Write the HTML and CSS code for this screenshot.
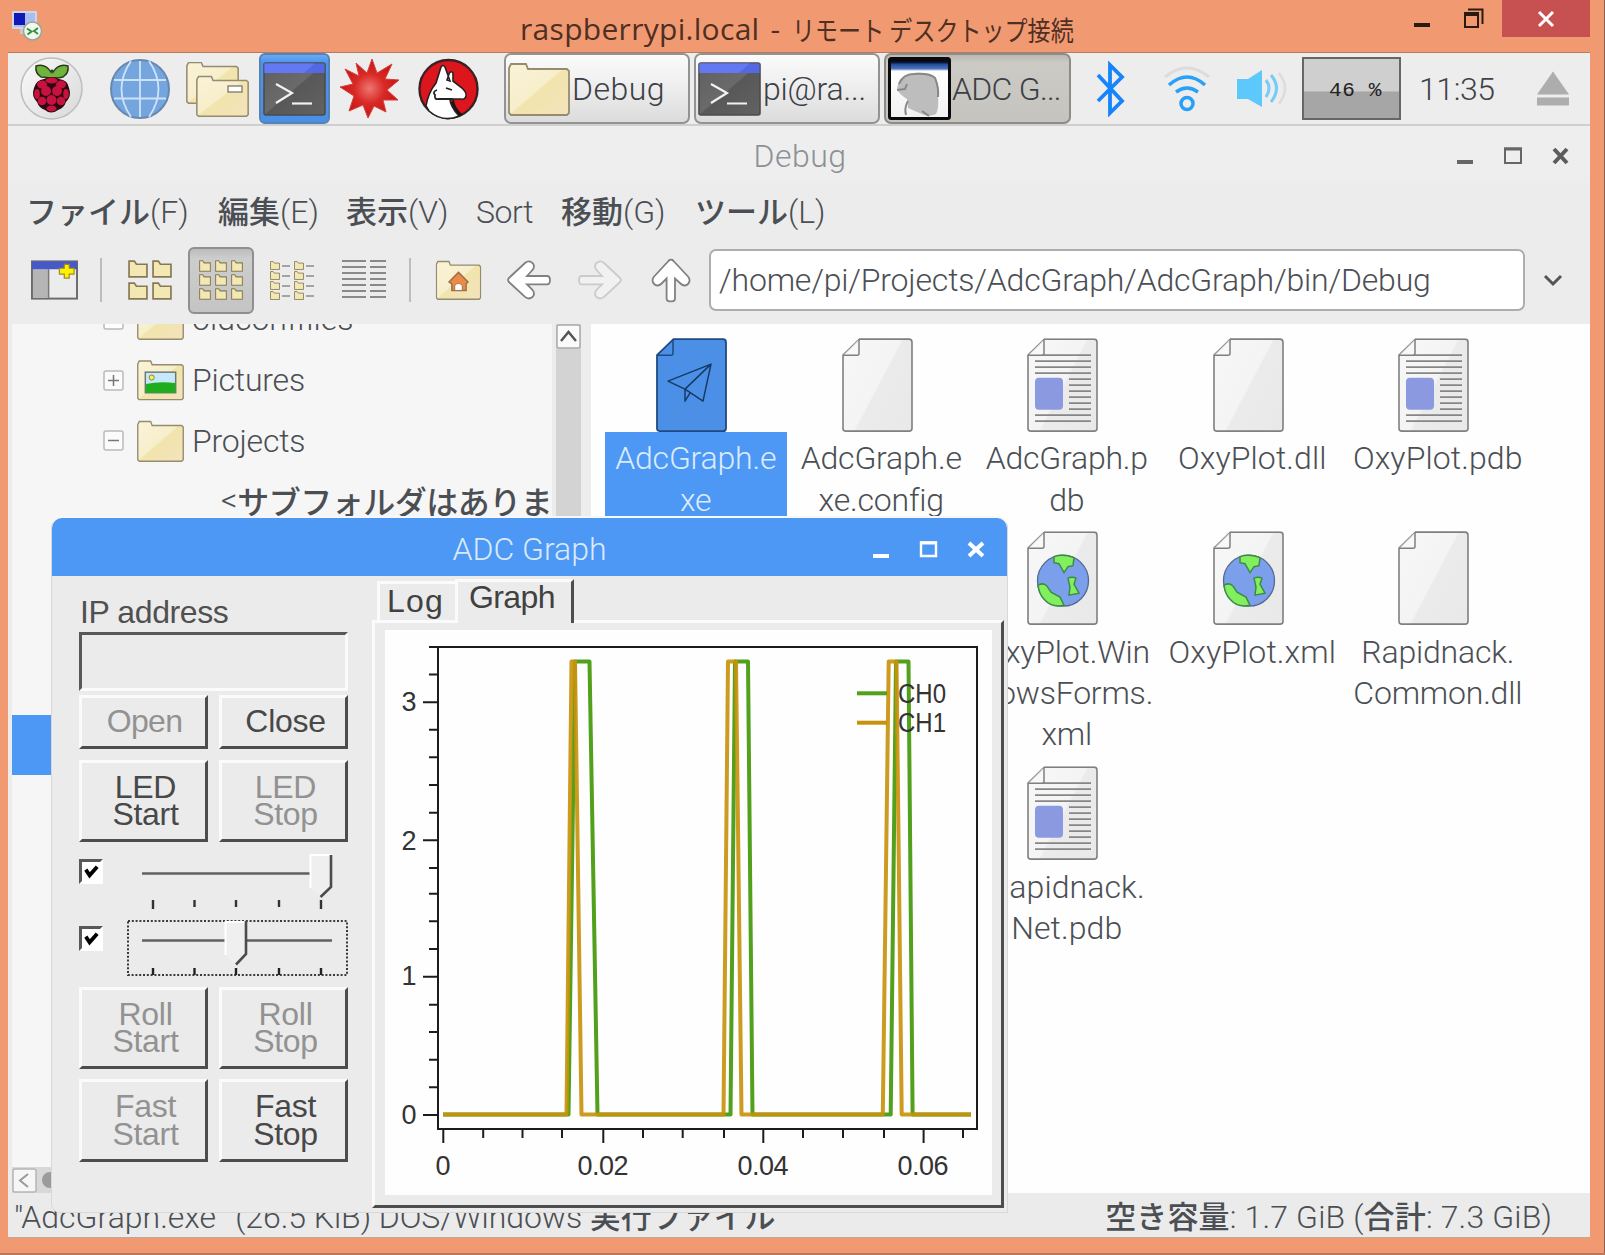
FILE: index.html
```html
<!DOCTYPE html>
<html lang="ja">
<head>
<meta charset="utf-8">
<title>raspberrypi.local - リモート デスクトップ接続</title>
<link rel="stylesheet" href="styles.css">
</head>
<body>
<svg class="defs" width="0" height="0" aria-hidden="true">
  <defs>
    <linearGradient id="gFolder" x1="0" y1="0" x2="1" y2="1">
      <stop offset="0" stop-color="#faf3d8"/><stop offset=".49" stop-color="#f7eecb"/><stop offset=".51" stop-color="#f1e4ac"/><stop offset="1" stop-color="#f3e3bd"/>
    </linearGradient>
    <linearGradient id="gPage" x1="0" y1=".15" x2="1" y2=".85">
      <stop offset="0" stop-color="#f7f7f7"/><stop offset=".5" stop-color="#f4f4f4"/><stop offset=".52" stop-color="#ebebeb"/><stop offset="1" stop-color="#e9e9e9"/>
    </linearGradient>
    <linearGradient id="gTerm" x1="0" y1="0" x2="1" y2="1">
      <stop offset="0" stop-color="#5f5f5f"/><stop offset=".49" stop-color="#6a6a6a"/><stop offset=".51" stop-color="#585858"/><stop offset="1" stop-color="#626262"/>
    </linearGradient>
    <radialGradient id="gStar"><stop offset="0" stop-color="#ee7672"/><stop offset=".5" stop-color="#d92a26"/><stop offset="1" stop-color="#c81414"/></radialGradient>
    <linearGradient id="gDisc" x1="0" y1="0" x2="1" y2="1"><stop offset="0" stop-color="#fafafa"/><stop offset="1" stop-color="#d9d9d9"/></linearGradient>
    <symbol id="folder" viewBox="0 0 62 54" preserveAspectRatio="none">
      <path d="M1 51V6l2-4h15l2 5h39l2 2v42l-2 2H3z" fill="url(#gFolder)" stroke="#958b6e" stroke-width="1.8"/>
    </symbol>
    <symbol id="mini" viewBox="0 0 19 17" preserveAspectRatio="none">
      <path d="M1 16V1h5l2 3h10v12z" fill="#f3e7b4" stroke="#857a55" stroke-width="1.6"/>
    </symbol>
    <symbol id="term" viewBox="0 0 63 54">
      <rect x="1" y="1" width="61" height="52" rx="2" fill="url(#gTerm)" stroke="#4c4c4c" stroke-width="1.6"/>
      <path d="M1.5 1.5h60V11h-60z" fill="#5468e4"/><path d="M1.5 1.500h50L41 11H1.500z" fill="#6478f4"/>
      <path d="M13 22l16 9-16 10" fill="none" stroke="#f2f2f2" stroke-width="2.2"/><path d="M29 41.500h20" stroke="#f2f2f2" stroke-width="2.2"/>
    </symbol>
    <symbol id="page" viewBox="0 0 71 94">
      <path d="M17.500 1H67q3 0 3 3v86q0 3-3 3H4q-3 0-3-3V17z" fill="url(#gPage)" stroke="#7f7f7f" stroke-width="1.600"/>
      <path d="M1 17h14q2 0 2-2V1" fill="#fafafa" fill-opacity=".7" stroke="#7f7f7f" stroke-width="1.500"/>
    </symbol>
    <symbol id="doc" viewBox="0 0 71 94">
      <use href="#page" width="71" height="94"/>
      <path d="M15 17h49M8 23h56M8 29h56M8 35h56M42 41h22M42 47h22M42 53h22M42 59h22M42 65h22M42 71h22M8 77h56M8 83h56" stroke="#868686" stroke-width="1.700"/>
      <rect x="8" y="39.500" width="28" height="32" rx="4" fill="#8b9ae0"/>
    </symbol>
    <symbol id="web" viewBox="0 0 71 94">
      <use href="#page" width="71" height="94"/>
      <circle cx="36" cy="49.500" r="25.500" fill="#7b9fea" stroke="#55698f" stroke-width="1.300"/>
      <path d="M27 25.500q9-3 20 1l-1 8-5 1-4 6-5-9-5-1zM41 47q4-2 8 0l-2 6 5 9-10 2 1-8zM11 54q6-3 9 1l4 6 9 5 4 8q-12 3-20-6-5-5-6-14z" fill="#82f05e" stroke="#3e8a48" stroke-width="1.500"/>
    </symbol>
    <symbol id="arrow" viewBox="0 0 44 40">
      <path d="M3 17L18 3q3-2.500 6-1t3 4.500q0 2-2 4L20 16h20q3 0 3 4.200t-3 4.200H20l5 5q2 2 2 4 0 3-3 4.500t-6-1L3 23q-4-3 0-6z" fill="#fff" stroke="#808080" stroke-width="1.800"/>
    </symbol>
  </defs>
</svg>

<div class="frame">
  <header class="rdp-bar">
    <svg class="rdp-icon" viewBox="0 0 32 32">
      <rect x="1" y="1" width="25" height="18" rx="1" fill="#cfd6e6"/><rect x="3" y="3" width="21" height="14" fill="#a9bdf2"/><path d="M3 3h11v12H3z" fill="#1018b8"/>
      <path d="M9 19h8v5H9z" fill="#c9c9d4"/>
      <circle cx="21.500" cy="21" r="9" fill="#f3f7ef" stroke="#98a594" stroke-width="1.500"/><path d="M16 18.500l4.500 3-4 3M27 18l-4 3 4 3" fill="none" stroke="#2f9440" stroke-width="2"/>
    </svg>
    <h1 class="rdp-title">raspberrypi.local<span class="dash">-</span><span class="rdp-jp">リモート デスクトップ接続</span></h1>
    <div class="rdp-btns">
      <svg width="16" height="4"><rect width="16" height="4" fill="#2b1a12"/></svg>
      <svg class="restore" width="22" height="21" viewBox="0 0 22 21"><path d="M5 1.500h14.500V16" fill="none" stroke="#2b1a12" stroke-width="2"/><rect x="2" y="6" width="13" height="13" fill="none" stroke="#2b1a12" stroke-width="2"/><path d="M1 6h15" stroke="#2b1a12" stroke-width="4"/></svg>
      <span class="rdp-close"><svg width="18" height="16" viewBox="0 0 18 16"><path d="M2 1l14 14M16 1L2 15" stroke="#fff" stroke-width="3"/></svg></span>
    </div>
  </header>

  <main class="desktop">
    <nav class="taskbar">
      <svg class="i-pi" viewBox="0 0 63 63"><circle cx="31.500" cy="31.500" r="30.500" fill="url(#gDisc)" stroke="#bdbdbd" stroke-width="1.500"/>
        <path d="M30 21q-6-1-9-1-6-4-5-11 9-3 15 6 1-4 2 0 6-9 15-6 1 7-5 11-3 1-9 1z" fill="#6fb43c" stroke="#2d3b1d" stroke-width="1.500"/>
        <path d="M24 22q8-4 15 0 9 1 10 9 3 8-3 14-2 6-8 8-7 5-13 0-6-2-8-8-6-6-3-14 2-8 10-9z" fill="#2c0812"/>
        <g fill="#c7113f"><ellipse cx="31.500" cy="23.500" rx="6" ry="3"/><ellipse cx="22" cy="27.500" rx="5" ry="4"/><ellipse cx="41" cy="27.500" rx="5" ry="4"/><circle cx="26" cy="34" r="5"/><circle cx="37" cy="34" r="5"/><ellipse cx="17" cy="37" rx="2.800" ry="5"/><ellipse cx="46" cy="37" rx="2.800" ry="5"/><circle cx="31.500" cy="43" r="5"/><circle cx="22" cy="44" r="4.300"/><circle cx="41" cy="44" r="4.300"/><ellipse cx="31.500" cy="51.500" rx="5" ry="3"/></g></svg>
      <svg class="i-globe" viewBox="0 0 60 60"><circle cx="30" cy="30" r="29" fill="#74a5de" stroke="#6888b0" stroke-width="2"/><path d="M30 2v56M4 21h52M4 39.500h52M21 2Q2 30 21 58M39 2q19 28 0 56" fill="none" stroke="#cfe3f8" stroke-width="1.800"/></svg>
      <svg class="i-files" viewBox="0 0 63 56"><use href="#folder" x="0" y="0" width="53" height="43"/><use href="#folder" x="10" y="14" width="53" height="42"/><rect x="42" y="25" width="14" height="6" fill="#fff" stroke="#8d8778" stroke-width="1.500"/></svg>
      <span class="i-term"><svg width="63" height="54"><use href="#term"/></svg></span>
      <svg class="i-star" viewBox="0 0 60 60"><path d="M32 0l5 14L52 5l-7 15 14 1-12 10 11 10-15 0 3 12-12-6-6 12-5-13-14 6 5-15L0 28l13-3L5 10l14 7-3-13 11 10z" fill="url(#gStar)" stroke="#d4403c" stroke-width="1" stroke-linejoin="round"/></svg>
      <svg class="i-wolf" viewBox="0 0 61 60"><circle cx="30.500" cy="30" r="29" fill="#dc161c" stroke="#3a2224" stroke-width="2.400"/><path d="M36 40q0 8 9 16l-8 2-8-10z" fill="#1d1416"/><path d="M8 47q2-13 10-23l5-16q2-3 4 0l5 14-3-1 2-6q2-4 4-1l0 8 9 7q5 5 4 8-1 4-5 3l-11 0q0 7 9 17-16 7-30-5z" fill="#fff" stroke="#222" stroke-width="1.600"/><path d="M19 31q-5 2-2 5-1 5 4 4l14 0M28 29l6 2" fill="none" stroke="#222" stroke-width="1.800"/></svg>
      <div class="task"><svg width="62" height="54"><use href="#folder"/></svg><span class="sp-debug">Debug</span></div>
      <div class="task"><svg width="63" height="54"><use href="#term"/></svg><span class="sp-pi">pi@ra...</span></div>
      <div class="task task-on"><svg width="63" height="63" viewBox="0 0 63 63"><defs><linearGradient id="gCap" x1="0" y1="0" x2="0" y2="1"><stop offset="0" stop-color="#000"/><stop offset=".06" stop-color="#04102c"/><stop offset=".1" stop-color="#264e9c"/><stop offset=".17" stop-color="#4c74ba"/><stop offset=".21" stop-color="#fff"/><stop offset="1" stop-color="#f2f2f2"/></linearGradient></defs><rect x="1.500" y="1.500" width="60" height="60" rx="2" fill="url(#gCap)" stroke="#0a0a0a" stroke-width="3"/><path d="M10 27q3-10 16-11 16-1 22 5 4 10 2 19 1 12-2 17-6 3-12 1l-16-7-1-9q-8-5-10-10z" fill="#bdbdbd"/><path d="M11 27q4-10 15-10 16-1 21 4 4 10 3 19M9 33l8-1 2-5M18 58q-2-7 2-14M34 54l7 5" fill="none" stroke="#888" stroke-width="2"/></svg><span class="sp-adc">ADC G...</span></div>
      <svg class="i-bt" viewBox="0 0 28 54"><path d="M2 13l24 26-12 12V3l12 12L2 39" fill="none" stroke="#1684fb" stroke-width="3.800"/></svg>
      <svg class="i-wifi" viewBox="0 0 46 46"><path d="M1 11Q23-7 45 11" fill="none" stroke="#dcdcdc" stroke-width="3"/><path d="M5 19q18-16 36 0M12 26q11-8 22 0" fill="none" stroke="#27a0f8" stroke-width="3.500"/><circle cx="23" cy="37.500" r="6" fill="none" stroke="#27a0f8" stroke-width="3.500"/></svg>
      <svg class="i-vol" viewBox="0 0 50 37"><path d="M0 9h11L25 0v37L11 29H0z" fill="#5cc8fc"/><path d="M29 10q6 8 0 17M34 5q11 13 0 27" fill="none" stroke="#74ccf8" stroke-width="3"/><path d="M42 3q12 15 0 31" fill="none" stroke="#dcdcdc" stroke-width="2.500"/></svg>
      <div class="cpu">46 %</div>
      <time class="clock">11:35</time>
      <svg class="i-eject" viewBox="0 0 32 34"><path d="M16 0l16 23H0zM0 26h32v8H0z" fill="#adadad"/></svg>
    </nav>

    <section class="fm">
      <header class="fm-title"><h2 class="sp-debug">Debug</h2>
        <svg class="wbtns" viewBox="0 0 112 18"><path d="M0 15h16" stroke="#666" stroke-width="4"/><path d="M48 1.500h16V16H48z" fill="none" stroke="#666" stroke-width="2"/><path d="M47 2h18" stroke="#666" stroke-width="3"/><path d="M97 2l13 14M110 2L97 16" stroke="#5c5c5c" stroke-width="4"/></svg>
      </header>
      <nav class="menu"><span class="m-file"><b>ファイル</b>(F)</span><span><b>編集</b>(E)</span><span><b>表示</b>(V)</span><span class="sp-sort">Sort</span><span><b>移動</b>(G)</span><span><b>ツール</b>(L)</span></nav>
      <div class="toolbar">
        <svg class="t-new" viewBox="0 0 48 40"><rect x="1" y="1" width="46" height="38" fill="#ececec" stroke="#6b6b6b" stroke-width="2"/><path d="M2 9h16v29H2z" fill="#b5b5b5"/><path d="M18 9v30" stroke="#777" stroke-width="1.500"/><path d="M1 1h46v8H1z" fill="#4759c9"/><path d="M34 4h5v4h5v6h-5v4h-5v-4h-5V8h5z" fill="#fdf000" stroke="#9a8c28" stroke-width="1.200"/></svg>
        <i class="sep sep-a"></i>
        <svg class="t-big" viewBox="0 0 44 40"><use href="#mini" width="20" height="18"/><use href="#mini" x="24" width="20" height="18"/><use href="#mini" y="22" width="20" height="18"/><use href="#mini" x="24" y="22" width="20" height="18"/></svg>
        <span class="t-on"><svg width="44" height="41"><use href="#mini" width="12" height="12"/><use href="#mini" x="16" width="12" height="12"/><use href="#mini" x="32" width="12" height="12"/><use href="#mini" y="14" width="12" height="12"/><use href="#mini" x="16" y="14" width="12" height="12"/><use href="#mini" x="32" y="14" width="12" height="12"/><use href="#mini" y="28" width="12" height="12"/><use href="#mini" x="16" y="28" width="12" height="12"/><use href="#mini" x="32" y="28" width="12" height="12"/></svg></span>
        <svg class="t-list" viewBox="0 0 45 40"><g stroke="#8b8b8b" stroke-width="1.600"><path d="M12 6h8M12 16h8M12 26h8M12 36h8M36 6h8M36 16h8M36 26h8M36 36h8"/></g><use href="#mini" y="1" width="10" height="9"/><use href="#mini" y="11" width="10" height="9"/><use href="#mini" y="21" width="10" height="9"/><use href="#mini" y="31" width="10" height="9"/><use href="#mini" x="24" y="1" width="10" height="9"/><use href="#mini" x="24" y="11" width="10" height="9"/><use href="#mini" x="24" y="21" width="10" height="9"/><use href="#mini" x="24" y="31" width="10" height="9"/></svg>
        <svg class="t-det" viewBox="0 0 45 40"><path d="M0 1h24M0 7h24M0 13h24M0 19h24M0 25h24M0 31h24M0 37h24M28 1h16M28 7h16M28 13h16M28 19h16M28 25h16M28 31h16M28 37h16" stroke="#8a8a8a" stroke-width="1.800"/></svg>
        <i class="sep sep-b"></i>
        <svg class="t-home" viewBox="0 0 48 42"><use href="#folder" width="48" height="42"/><path d="M14 23l10-10 10 10-2 2v7H17v-7z" fill="#ee8a48" stroke="#9a6f48" stroke-width="1.500"/><path d="M20 32v-5q4-5 8 0v5z" fill="#fff" stroke="#9a6f48"/></svg>
        <svg class="t-back" viewBox="0 0 44 40"><use href="#arrow"/></svg>
        <svg class="t-fwd" viewBox="0 0 44 40"><g transform="matrix(-1 0 0 1 44 0)"><use href="#arrow"/></g></svg>
        <svg class="t-up" viewBox="0 0 40 44"><g transform="matrix(0 1 -1 0 40 0)"><use href="#arrow" width="44" height="40"/></g></svg>
        <div class="address">/home/pi/Projects/AdcGraph/AdcGraph/bin/Debug</div>
        <svg class="t-drop" viewBox="0 0 20 12"><path d="M2 2l8 8 8-8" fill="none" stroke="#555" stroke-width="3"/></svg>
      </div>
      <div class="panes">
        <div class="side">
          <div class="tree">
            <div class="row"><svg class="exp" viewBox="0 0 21 21"><rect x="1" y="1" width="19" height="19" rx="2" fill="#fff" stroke="#bbb" stroke-width="1.500"/></svg><svg class="fold"><use href="#folder"/></svg><span>oldconffiles</span></div>
            <div class="row"><svg class="exp" viewBox="0 0 21 21"><rect x="1" y="1" width="19" height="19" rx="2" fill="#fbfbfb" stroke="#bbb" stroke-width="1.500"/><path d="M5 10.500h11M10.500 5v11" stroke="#777" stroke-width="1.500"/></svg><svg class="fold" viewBox="0 0 48 42"><use href="#folder" width="48" height="42"/><rect x="8.500" y="13" width="31" height="21" fill="#c7e8fb" stroke="#6b7a70" stroke-width="1.500"/><path d="M9 25q14-3 30-1v10H9z" fill="#1fae1b"/><circle cx="15" cy="18.500" r="2.600" fill="#f5f060" stroke="#7d8a30"/></svg><span>Pictures</span></div>
            <div class="row"><svg class="exp" viewBox="0 0 21 21"><rect x="1" y="1" width="19" height="19" rx="2" fill="#fbfbfb" stroke="#bbb" stroke-width="1.500"/><path d="M5 10.500h11" stroke="#777" stroke-width="1.500"/></svg><svg class="fold"><use href="#folder"/></svg><span>Projects</span></div>
            <div class="row row-sub">&lt;<b>サブフォルダはありません</b>&gt;</div>
            <div class="row"></div><div class="row"></div><div class="row"></div>
            <div class="row row-sel"></div>
          </div>
          <div class="vbar"><svg viewBox="0 0 25 25"><rect x="1" y="1" width="23" height="23" rx="2" fill="#fafafa" stroke="#aaa" stroke-width="1.500"/><path d="M5 17l7.500-9 7.500 9" fill="none" stroke="#555" stroke-width="2.500"/></svg></div>
          <div class="hbar"><svg viewBox="0 0 25 25"><rect x="1" y="1" width="23" height="23" rx="2" fill="#f6f6f6" stroke="#b5b5b5" stroke-width="1.500"/><path d="M16 6l-8 6.500 8 6.500" fill="none" stroke="#999" stroke-width="2"/></svg><i></i></div>
        </div>
        <div class="files">
          <figure class="sel"><svg viewBox="0 0 71 94"><path d="M17.500 1H67q3 0 3 3v86q0 3-3 3H4q-3 0-3-3V17z" fill="#4b90e6" stroke="#1f4a80" stroke-width="1.800"/><path d="M1 17h14q2 0 2-2V1" fill="none" stroke="#1f4a80" stroke-width="1.500"/><path d="M12 43l43-17-8 37-18-12zM55 26L29 51v12l5-8" fill="none" stroke="#173a66" stroke-width="1.500" stroke-linejoin="round"/></svg><figcaption>AdcGraph.e<br>xe</figcaption></figure>
          <figure><svg><use href="#page"/></svg><figcaption>AdcGraph.e<br>xe.config</figcaption></figure>
          <figure><svg><use href="#doc"/></svg><figcaption>AdcGraph.p<br>db</figcaption></figure>
          <figure><svg><use href="#page"/></svg><figcaption class="wide">OxyPlot.dll</figcaption></figure>
          <figure><svg><use href="#doc"/></svg><figcaption class="wide">OxyPlot.pdb</figcaption></figure>
          <figure class="c3"><svg><use href="#web"/></svg><figcaption>OxyPlot.Win<br>dowsForms.<br>xml</figcaption></figure>
          <figure><svg><use href="#web"/></svg><figcaption class="wide">OxyPlot.xml</figcaption></figure>
          <figure><svg><use href="#page"/></svg><figcaption>Rapidnack.<br>Common.dll</figcaption></figure>
          <figure class="c3"><svg><use href="#doc"/></svg><figcaption class="wide">Rapidnack.<br>Net.pdb</figcaption></figure>
        </div>
      </div>
      <footer class="status"><span><span class="sp-exe">"AdcGraph.exe"</span><span class="sp-kib">(26.5 KiB) DOS/Windows <b>実行ファイル</b></span></span><span class="sp-free"><b>空き容量</b>: 1.7 GiB (<b>合計</b>: 7.3 GiB)</span></footer>
    </section>

    <section class="adc">
      <header class="adc-title"><h2>ADC Graph</h2>
        <svg class="wbtns" viewBox="0 0 112 18"><path d="M0 15h16" stroke="#fff" stroke-width="4"/><path d="M48 1.500h15V15H48z" fill="none" stroke="#fff" stroke-width="2.400"/><path d="M47 2h17" stroke="#fff" stroke-width="3"/><path d="M96 2l14 13M110 2L96 15" stroke="#fff" stroke-width="4"/></svg>
      </header>
      <div class="adc-body">
        <div class="controls">
          <label>IP address</label>
          <div class="field"></div>
          <div class="pair p-open"><button class="off sp-open">Open</button><button>Close</button></div>
          <div class="pair p-led"><button>LED<br>Start</button><button class="off">LED<br>Stop</button></div>
          <div class="slide s1"><span class="check"><svg viewBox="0 0 20 20"><path d="M4 8l4 6 8-9" fill="none" stroke="#000" stroke-width="4"/></svg></span>
            <svg class="track" viewBox="0 0 221 72"><path d="M15 25.500h169" stroke="#606060" stroke-width="2.600"/><g stroke="#333" stroke-width="2.400"><path d="M26 52v9M67.500 52v7M109 52v7M152 52v7M194 52v9"/></g><path d="M183 7h22v32l-11 11-11-11z" fill="#efefef"/><path d="M183.500 40V7H205" fill="none" stroke="#fff" stroke-width="2"/><path d="M204 7v32l-10.500 10" fill="none" stroke="#4c4c4c" stroke-width="2.600"/></svg></div>
          <div class="slide s2"><span class="check"><svg viewBox="0 0 20 20"><path d="M4 8l4 6 8-9" fill="none" stroke="#000" stroke-width="4"/></svg></span>
            <svg class="track" viewBox="0 0 221 56"><rect x="1" y="1" width="219" height="54" fill="none" stroke="#3a3a3a" stroke-width="2" stroke-dasharray="2 1.800"/><path d="M15 20.500h190" stroke="#606060" stroke-width="2.600"/><g stroke="#222" stroke-width="2.400"><path d="M26 48v7M67.500 48v7M109 48v7M152 48v7M194 48v7"/></g><path d="M98 1h22v33l-11 11-11-11z" fill="#efefef"/><path d="M98.500 35V2H119" fill="none" stroke="#fff" stroke-width="2"/><path d="M119 1v33L109 44.500" fill="none" stroke="#4c4c4c" stroke-width="2.600"/></svg></div>
          <div class="pair p-roll"><button class="off">Roll<br>Start</button><button class="off">Roll<br>Stop</button></div>
          <div class="pair p-fast"><button class="off">Fast<br>Start</button><button>Fast<br>Stop</button></div>
        </div>
        <div class="tabs">
          <div class="tabrow"><span class="tab tab-log">Log</span><span class="tab tab-graph">Graph</span></div>
          <div class="tabpage">
            <svg class="plot" viewBox="385 630 607 565">
              <g fill="none" stroke-width="4" stroke-linejoin="round">
                <path stroke="#52a01c" d="M443 1114.500H568.500L575 661.500H589.500L597.500 1114.500H730.500L735 661.500H748L752.500 1114.500H890.700L896 661.500H908.500L912.600 1114.500H971"/>
                <path stroke="#c8930c" stroke-opacity=".92" d="M443 1114.500H566.500L571.500 661.500H575L581.500 1114.500H723.500L728 661.500H736L741.500 1114.500H882.800L888.700 661.500H896.500L901.700 1114.500H971"/>
                <path stroke="#52a01c" d="M857 693.300H887"/><path stroke="#c8930c" d="M857 722.700H887"/>
              </g>
              <g fill="none" stroke="#1c1c1c" stroke-width="2">
                <rect x="438" y="647" width="539" height="482"/>
                <path d="M423 702.300h15M423 840.300h15M423 976.700h15M423 1115h15M429 647h9M429 674.500h9M429 729.700h9M429 757.300h9M429 785h9M429 812.700h9M429 868h9M429 893.700h9M429 921.300h9M429 949h9M429 1004.700h9M429 1032h9M429 1059.700h9M429 1087.300h9"/>
                <path d="M443.300 1129v14M603.300 1129v14M763.300 1129v14M923.600 1129v14M483.200 1129v9M522.500 1129v9M562 1129v9M643 1129v9M682.700 1129v9M724 1129v9M803 1129v9M843 1129v9M884 1129v9M963 1129v9"/>
              </g>
              <g class="num">
                <text x="409" y="711">3</text><text x="409" y="849.500">2</text><text x="409" y="985">1</text><text x="409" y="1123.500">0</text>
                <text x="443" y="1175">0</text><text x="603" y="1175" textLength="51">0.02</text><text x="763" y="1175" textLength="51">0.04</text><text x="923" y="1175" textLength="51">0.06</text>
              </g>
              <g class="legend"><text x="898" y="702.500" textLength="48" lengthAdjust="spacingAndGlyphs">CH0</text><text x="898" y="732" textLength="48" lengthAdjust="spacingAndGlyphs">CH1</text></g>
            </svg>
          </div>
        </div>
      </div>
    </section>
  </main>
</div>
</body>
</html>
```
FILE: styles.css
```css
*{box-sizing:border-box}
body{margin:0;background:#f19a72;overflow:hidden;font:300 32px/40px Roboto,"Noto Sans CJK JP",sans-serif;color:#4b4f54}
h1,h2,figure{margin:0;font:inherit}
b{font-family:"Noto Sans CJK JP",sans-serif;font-weight:500;font-size:31px;line-height:0}
svg{display:block;flex:none;overflow:visible}
.defs{position:absolute}
.frame{width:1605px;height:1255px;padding:0 15px 0 8px;background:#f19a72;border-bottom:2px solid #b9795c;box-shadow:inset -1px 0 #8b6150}

/* outer session window */
.rdp-bar{height:53px;display:flex;align-items:flex-start;border-bottom:1px solid #b57c62}
.rdp-icon{width:32px;height:32px;margin:10px 0 0 3px}
.rdp-title{font:30px/40px "Open Sans",sans-serif;color:#4f2f22;white-space:pre;margin:9px 0 0 477px;letter-spacing:.3px;width:556px;display:flex}
.dash{margin:0 12px 0 11px}
.rdp-jp{font:27.500px/40px "Noto Sans CJK JP",sans-serif;letter-spacing:0;transform:scaleX(.838);transform-origin:0 50%}
.rdp-btns{display:flex;align-items:flex-start;height:37px;margin-left:auto}
.rdp-btns>svg:first-child{margin-top:23px}
.restore{margin:8px 17px 0 33px}
.rdp-close{width:88px;height:37px;background:#c75050;display:flex;justify-content:center;align-items:center}

.desktop{position:relative;width:1582px;height:1185px;background:#ececec;overflow:hidden;display:flex;flex-direction:column;border-bottom:1px solid #c2a79a}
.taskbar{height:73px;flex:none;display:flex;align-items:center;background:#ededed;border-bottom:2px solid #cfcfcf}
.i-pi{width:63px;height:63px;margin-left:12px}
.i-globe{width:60px;height:60px;margin-left:27px}
.i-files{width:63px;height:56px;margin-left:16px}
.i-term{width:71px;height:71px;margin-left:10px;background:linear-gradient(#6aa8f4,#4c94ec 12%,#4a90e4);border:2px solid #5783b4;border-radius:6px;display:flex;align-items:center;padding-left:2px}
.i-star{width:60px;height:60px;margin-left:10px}
.i-wolf{width:61px;height:60px;margin-left:18px}
.task{width:186px;height:71px;margin-left:4px;padding-left:2px;border:2px solid #939393;border-radius:7px;background:linear-gradient(#fbfbfb,#ededed 50%,#dcdcdc);display:flex;align-items:center;color:#3c4045;white-space:nowrap;overflow:hidden}
.task span{margin:1px 0 0 2px}
.i-wolf+.task{margin-left:25px}
.task-on{width:187px;background:linear-gradient(#b9b8b4,#cbcac5 12%,#c6c4be);border-color:#8d8c88}
.sp-debug{letter-spacing:.5px}
.task .sp-pi{letter-spacing:-.2px}
.task .sp-adc{letter-spacing:-.7px;margin-left:1px}
.i-bt{width:28px;height:54px;margin-left:25px}
.i-wifi{width:46px;height:46px;margin-left:40px}
.i-vol{width:50px;height:37px;margin-left:27px}
.cpu{width:99px;height:63px;margin-left:15px;border:2px solid #666;background:linear-gradient(#cfcfcf 54%,#a6a6a6 56%);font:500 21px/64px "Liberation Mono",monospace;color:#222;letter-spacing:.6px;text-align:center;padding-left:8px}
.clock{margin:1px 0 0 18px;letter-spacing:-.4px;color:#3f4348;font-weight:300}
.i-eject{width:32px;height:35px;margin-left:auto;margin-right:21px}

/* file manager */
.fm{flex:1;display:flex;flex-direction:column;min-height:0}
.fm-title{position:relative;height:57px;flex:none;background:#eee;color:#8d9196;text-align:center;line-height:60px}
.fm-title h2{transform:translateX(1px)}
.wbtns{width:112px;height:18px;position:absolute;right:21px;top:21px}
.menu{height:60px;flex:none;display:grid;grid-template-columns:189px 128px 130px 85px 134px auto;padding-left:21px;line-height:58px;white-space:nowrap}
.m-file{margin-left:-3px}
.sp-sort{letter-spacing:-.4px}
.toolbar{height:81px;flex:none;display:flex;align-items:center;padding-bottom:7px}
.toolbar>svg{height:40px}
.t-new{width:47px;margin-left:23px}
.sep{width:2px;height:44px;background:#bdbdbd}
.sep-a{margin-left:22px}
.t-big{width:44px;margin-left:26px}
.t-on{width:66px;height:67px;margin-left:16px;border:2px solid #8f8f8f;border-radius:6px;background:linear-gradient(#bcbcbc,#cdcdcd 15%,#c4c4c4);display:flex;align-items:center;justify-content:center}
.t-list{width:45px;margin-left:16px}
.t-det{width:45px;margin-left:27px}
.sep-b{margin-left:22px}
.t-home{width:47px;margin-left:24px}
.t-back{width:44px;margin-left:25px}
.t-fwd{width:44px;margin-left:27px;opacity:.3}
.toolbar>.t-up{width:40px;height:45px;margin-left:29px}
.address{width:816px;height:62px;margin-left:18px;border:2px solid #adadad;border-radius:7px;background:#fff;padding-left:8px;line-height:58px;letter-spacing:-.19px;white-space:nowrap}
.toolbar>.t-drop{width:20px;height:12px;margin-left:18px}
.panes{flex:1;display:flex;min-height:0}
.side{width:583px;padding-left:4px;border-right:10px solid #ededed;display:grid;grid-template:1fr 26px/544px 25px;background:#ececec}
.tree{background:#f6f6f6;overflow:hidden;margin-right:4px}
.vbar{background:#d3d3d3}
.vbar svg{width:25px;height:25px}
.hbar{background:#d8d8d8;display:flex;align-items:center;grid-column:1/3}
.hbar svg{width:25px;height:25px;margin-left:0}
.hbar i{width:300px;height:16px;margin-left:5px;border-radius:8px;background:#9b9b9b}
.row{height:60.800px;display:flex;align-items:center;padding-left:91px;white-space:nowrap}
.row:first-child{margin-top:-35px}
.row span{margin-left:8px;letter-spacing:-.2px}
.row:first-child span{letter-spacing:0}
.exp{width:21px;height:21px}
.fold{width:47px;height:42px;margin-left:13px}
.row-sub{padding:0 0 4px 209px}
.row-sub b{font-size:32px;letter-spacing:-.5px}
.row-sel{background:#4c98f4}
.files{flex:1;background:#fefefe;display:grid;grid-template-columns:repeat(5,185.500px);grid-auto-rows:max-content;align-content:start;row-gap:10.600px;padding:14px 0 0 12px}
.files svg{width:71px;height:94.300px;margin:0 auto;position:relative;left:-4px}
.c3{grid-column-start:3}
figcaption{padding-top:6px;line-height:41.300px;letter-spacing:-.2px;text-align:center;white-space:nowrap}
figcaption.wide{letter-spacing:.1px}
.sel figcaption{background:#4c98f4;color:#dcebfd;margin:0 2px}
.status{height:44px;flex:none;display:flex;justify-content:space-between;padding:0 38px 0 6px;line-height:49px;background:#ebebeb;white-space:pre}
.sp-exe{letter-spacing:0;margin-right:10px}
.sp-kib{letter-spacing:-.05px}
.sp-free{letter-spacing:.15px}

/* ADC Graph window */
.adc{position:absolute;left:44px;top:465px;width:955px;height:694px;background:#ebebeb;border-radius:10px 10px 0 8px;box-shadow:0 -2px #f8f8f8,0 0 0 1px #d8d8d8;font-family:"Liberation Sans",sans-serif;font-weight:400;color:#414141}
.adc-title{position:relative;height:58px;background:#4c98f4;border-radius:10px 10px 0 0;color:#dbe9fc;text-align:center;font-family:Roboto,sans-serif;font-weight:300;line-height:63px}
.adc-title .wbtns{right:22px;top:23px}
.adc-body{display:flex;padding-left:27px}
.controls{width:269px;padding-top:16px}
.controls label{display:block;padding-left:1px;letter-spacing:-.4px;color:#505050}
.field{height:59px;border:solid;border-width:3px;border-color:#585858 #fbfbfb #fbfbfb #585858}
.pair{display:grid;grid-template-columns:129px 129px;gap:11px}
.p-open{height:54px;margin-top:4px}
.p-led{height:82px;margin-top:11px}
.p-roll{height:82px;margin-top:11px}
.p-fast{height:83px;margin-top:10px}
button{font:32px/27.500px "Liberation Sans",sans-serif;letter-spacing:-.3px;color:#484848;background:#ebebeb;border:solid;border-width:3px;border-color:#fbfbfb #4d4d4d #4d4d4d #fbfbfb;padding:0 0 0 4px;border-radius:0}
.off{color:#929292}
.sp-open{letter-spacing:-.7px;padding-left:2px}
.slide{display:flex;justify-content:space-between;align-items:flex-start}
.s1{height:72px;margin-top:6px}
.s2{height:56px}
.check{width:24px;height:25px;border:solid;border-width:3px;border-color:#585858 #fff #fff #585858;background:#fff;margin-top:6px}
.check svg{width:19px;height:19px}
.s1 .check{margin-top:11px}
.track{width:221px;height:56px}
.s1 .track{height:72px}
.tabs{width:632px;margin-left:24px}
.tabrow{height:44px;display:flex;align-items:flex-end;padding-left:5px}
.tab{border:solid #fbfbfb;border-width:3px 0 0 3px}
.tab-log{width:78px;height:39px;padding-left:7px;line-height:34px;letter-spacing:1.200px}
.tab-graph{width:119px;height:44px;padding-left:11px;border-right:3px solid #4d4d4d;line-height:30px;letter-spacing:-.6px;margin-bottom:-3px;background:#ebebeb;position:relative}
.tabpage{height:588px;border:solid;border-width:3px;border-color:#fbfbfb #4d4d4d #4d4d4d #fbfbfb;padding:7px 9px 10px 10px}
.plot{width:607px;height:565px;background:#fefefe}
.plot text{font:27px "Liberation Sans",sans-serif;fill:#333}
.num{text-anchor:middle}
```
